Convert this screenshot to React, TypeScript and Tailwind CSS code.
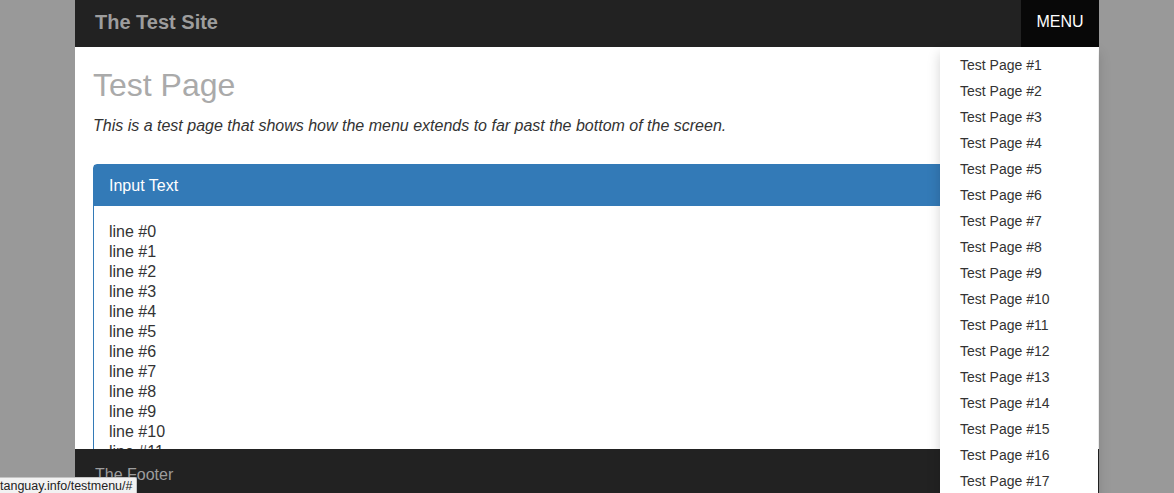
import React from "react";

const lines = Array.from({ length: 14 }, (_, i) => `line #${i}`);
const pages = Array.from({ length: 17 }, (_, i) => `Test Page #${i + 1}`);

export default function App() {
  return (
    <div
      className="relative h-[493px] w-full overflow-hidden bg-[#999999]"
      style={{ fontFamily: '"Liberation Sans", Arial, sans-serif' }}
    >
      <div className="relative mx-auto flex h-[493px] w-[1024px] flex-col bg-white">
        {/* navbar */}
        <div className="flex h-[47px] shrink-0 items-stretch justify-between bg-[#222222]">
          <div className="flex items-center pb-[3px] pl-[20px] text-[20px] font-bold leading-none text-[#9d9d9d]">
            The Test Site
          </div>
          <div className="flex w-[78px] items-center justify-center bg-[#080808] pb-[4px] text-[16px] leading-none text-white">
            MENU
          </div>
        </div>

        {/* content */}
        <div className="min-h-0 flex-1 overflow-hidden px-[18px]">
          <h1 className="mt-[20px] text-[32px] leading-[36px] text-[#aaaaaa]">Test Page</h1>
          <p className="mt-[12px] text-[16px] italic leading-[22px] text-[#333333]">
            This is a test page that shows how the menu extends to far past the bottom of the screen.
          </p>
          <div className="mt-[27px] rounded-t-[4px] border border-[#337ab7]">
            <div className="flex h-[41px] items-center bg-[#337ab7] px-[15px] pt-[1px] text-[16px] text-white">
              Input Text
            </div>
            <div className="px-[15px] pt-[16px] text-[16px] leading-[20px] text-[#333333]">
              {lines.map((l) => (
                <div key={l}>{l}</div>
              ))}
            </div>
          </div>
        </div>

        {/* footer */}
        <div className="h-[44px] shrink-0 bg-[#222222] pl-[20px] pt-[17px] text-[16px] leading-[18px] text-[#9d9d9d]">
          The Footer
        </div>

        {/* dropdown menu */}
        <div className="absolute right-[1px] top-[47px] w-[158px] bg-white py-[5px] shadow-[0_6px_12px_rgba(0,0,0,0.175)]">
          {pages.map((p) => (
            <div key={p} className="px-[20px] py-[3px] text-[14px] leading-[20px] text-[#333333]">
              {p}
            </div>
          ))}
        </div>
      </div>

      {/* status bubble */}
      <div className="absolute bottom-0 left-0 h-[16px] w-[137px] overflow-hidden whitespace-nowrap rounded-tr-[2px] border-r border-t border-[#c4c4c4] bg-[#f2f2f2] text-[12.5px] leading-[17px] text-[#222222]">
        tanguay.info/testmenu/#
      </div>
    </div>
  );
}
